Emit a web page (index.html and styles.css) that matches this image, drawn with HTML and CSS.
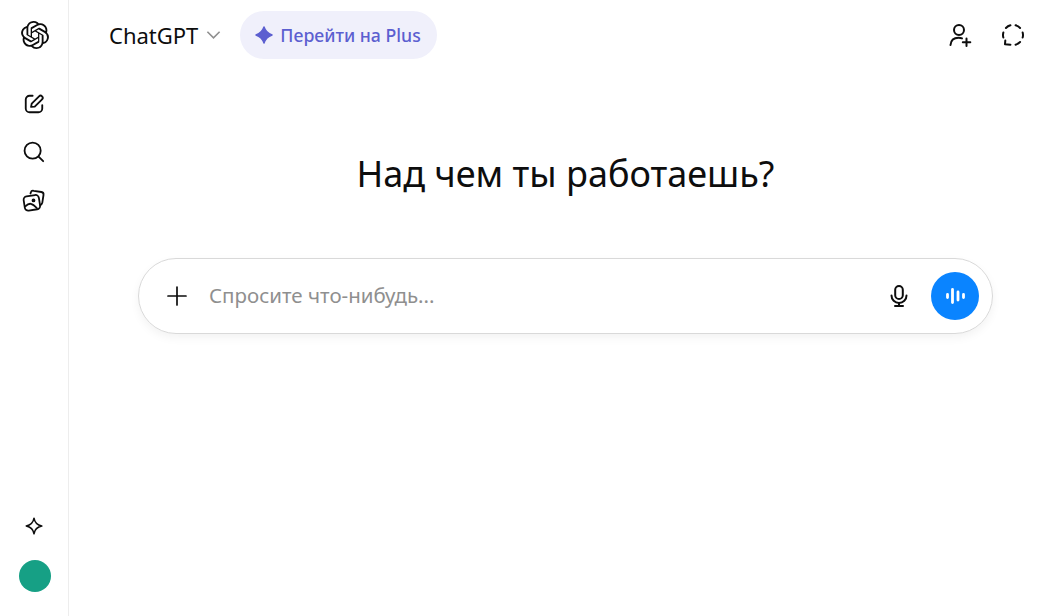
FILE: index.html
```html
<!DOCTYPE html>
<html lang="ru">
<head>
    <meta charset="utf-8">
    <title>ChatGPT</title>
    <link rel="stylesheet" href="styles.css">
</head>
<body>
    <aside class="sidebar">
        <a class="side-logo" href="#">
            <svg class="logo-icon" viewBox="0 0 24 24"><path d="M22.2819 9.8211a5.9847 5.9847 0 0 0-.5157-4.9108 6.0462 6.0462 0 0 0-6.5098-2.9A6.0651 6.0651 0 0 0 4.9807 4.1818a5.9847 5.9847 0 0 0-3.9977 2.9 6.0462 6.0462 0 0 0 .7427 7.0966 5.98 5.98 0 0 0 .511 4.9107 6.051 6.051 0 0 0 6.5146 2.9001A5.9847 5.9847 0 0 0 13.2599 24a6.0557 6.0557 0 0 0 5.7718-4.2058 5.9894 5.9894 0 0 0 3.9977-2.9001 6.0557 6.0557 0 0 0-.7475-7.0729zm-9.022 12.6081a4.4755 4.4755 0 0 1-2.8764-1.0408l.1419-.0804 4.7783-2.7582a.7948.7948 0 0 0 .3927-.6813v-6.7369l2.02 1.1686a.071.071 0 0 1 .038.052v5.5826a4.504 4.504 0 0 1-4.4945 4.4944zm-9.6607-4.1254a4.4708 4.4708 0 0 1-.5346-3.0137l.142.0852 4.783 2.7582a.7712.7712 0 0 0 .7806 0l5.8428-3.3685v2.3324a.0804.0804 0 0 1-.0332.0615L9.74 19.9502a4.4992 4.4992 0 0 1-6.1408-1.6464zM2.3408 7.8956a4.485 4.485 0 0 1 2.3655-1.9728V11.6a.7664.7664 0 0 0 .3879.6765l5.8144 3.3543-2.0201 1.1685a.0757.0757 0 0 1-.071 0l-4.8303-2.7865A4.504 4.504 0 0 1 2.3408 7.872zm16.5963 3.8558L13.1038 8.364 15.1192 7.2a.0757.0757 0 0 1 .071 0l4.8303 2.7913a4.4944 4.4944 0 0 1-.6765 8.1042v-5.6772a.79.79 0 0 0-.407-.667zm2.0107-3.0231l-.142-.0852-4.7735-2.7818a.7759.7759 0 0 0-.7854 0L9.409 9.2297V6.8974a.0662.0662 0 0 1 .0284-.0615l4.8303-2.7866a4.4992 4.4992 0 0 1 6.6802 4.66zM8.3065 12.863l-2.02-1.1638a.0804.0804 0 0 1-.038-.0567V6.0742a4.4992 4.4992 0 0 1 7.3757-3.4537l-.142.0805L8.704 5.459a.7948.7948 0 0 0-.3927.6813zm1.0976-2.3654l2.602-1.4998 2.6069 1.4998v2.9994l-2.5974 1.4997-2.6067-1.4997Z"/></svg>
        </a>
        <nav class="side-nav">
            <a class="side-btn" href="#">
                <svg class="icon icon-side" viewBox="0 0 24 24"><path d="M10.5 3H7.200a4.200 4.200 0 0 0-4.200 4.200v9.600a4.200 4.200 0 0 0 4.200 4.200h9.600a4.200 4.200 0 0 0 4.200-4.200v-3.600"/><path d="M8.800 15.200l.7-3.600 8-8a2.300 2.300 0 0 1 3.300 3.300l-8 8z"/></svg>
            </a>
            <a class="side-btn" href="#">
                <svg class="icon icon-side" viewBox="0 0 24 24"><circle cx="10.500" cy="10.500" r="8.800"/><path d="M17 17l5 5"/></svg>
            </a>
            <a class="side-btn" href="#">
                <svg class="icon icon-thin" viewBox="0 0 24 24"><path d="M8.500 5.500l.3-1a2.500 2.500 0 0 1 3-1.700l7.600 1.200a2.600 2.600 0 0 1 2.100 3l-1.100 7.200a5 5 0 0 1-2 3"/><rect x="2.200" y="7.600" width="15.400" height="14.400" rx="3.400" transform="rotate(-9 10 15)"/><circle cx="11.500" cy="12.400" r="1"/><path d="M3.600 18.200c3.600-3.800 6.600-3.200 11.200 1.800"/></svg>
            </a>
        </nav>
        <div class="side-bottom">
            <a class="side-btn side-btn-small" href="#">
                <svg class="icon icon-star" viewBox="0 0 18 18"><path d="M9 1.200c.7 4.400 3 6.900 7.800 7.800-4.800.9-7.100 3.400-7.800 7.800-.7-4.400-3-6.900-7.800-7.800C6 8.100 8.300 5.600 9 1.200z"/></svg>
            </a>
            <div class="avatar"></div>
        </div>
    </aside>

    <main class="main">
        <header class="topbar">
            <button class="model-btn">
                ChatGPT
                <svg class="chevron" viewBox="0 0 16 10"><path d="M1.500 1.500L8 8l6.500-6.500"/></svg>
            </button>
            <button class="plus-btn">
                <svg class="plus-star" viewBox="0 0 18 18"><path d="M9 1Q11 7 17 9Q11 11 9 17Q7 11 1 9Q7 7 9 1z"/></svg>
                Перейти на Plus
            </button>
            <div class="top-actions">
                <svg class="icon" viewBox="0 0 24 24"><circle cx="11" cy="7" r="5"/><path d="M2.500 22c.4-4.600 3.500-7.300 8-7.300 1.400 0 2.500.2 3.500.7"/><path d="M18.500 15.500v7.500M14.800 19.200h7.500"/></svg>
                <svg class="icon" viewBox="0 0 24 24"><path d="M14.590 2.340A10 10 0 0 1 19.070 4.930M21.660 9.410A10 10 0 0 1 21.660 14.590M19.070 19.070A10 10 0 0 1 14.590 21.660M9.410 21.660L4 21.200 4.300 17.500M2.340 14.590A10 10 0 0 1 2.340 9.410M4.930 4.930A10 10 0 0 1 9.410 2.340"/></svg>
            </div>
        </header>

        <h1 class="title">Над чем ты работаешь?</h1>

        <form class="composer">
            <svg class="composer-plus" viewBox="0 0 22 22"><path d="M11 2v18M2 11h18"/></svg>
            <span class="placeholder">Спросите что-нибудь...</span>
            <svg class="mic" viewBox="0 0 24 24"><rect x="8.200" y="2" width="7.600" height="13" rx="3.800"/><path d="M4.500 11.500a7.500 7.500 0 0 0 15 0"/><path d="M12 19v3M8 22h8"/></svg>
            <button class="voice-btn" type="button">
                <svg viewBox="0 0 20 20"><path d="M2.500 8.500v3M7.500 3.500v13M13 6v8M18.500 8.500v3"/></svg>
            </button>
        </form>
    </main>
</body>
</html>
```

FILE: styles.css
```css
* {
    box-sizing: border-box;
}

body {
    margin: 0;
    height: 100vh;
    display: flex;
    overflow: hidden;
    background: #fff;
    color: #0d0d0d;
    font-family: 'Noto Sans', 'Open Sans', sans-serif;
}

svg {
    display: block;
    flex-shrink: 0;
}

.icon {
    width: 24px;
    height: 24px;
    fill: none;
    stroke: #0d0d0d;
    stroke-width: 2;
    stroke-linecap: round;
    stroke-linejoin: round;
}

.icon-side {
    width: 22px;
    height: 22px;
}

.icon-thin {
    stroke-width: 1.800;
}

/* Sidebar */
.sidebar {
    width: 69px;
    flex-shrink: 0;
    display: flex;
    flex-direction: column;
    align-items: center;
    border-right: 1px solid #ededed;
    padding: 21px 0 24px;
}

.side-logo {
    display: flex;
    margin-left: 2px;
}

.logo-icon {
    width: 28px;
    height: 28px;
    fill: #0d0d0d;
}

.side-nav {
    display: flex;
    flex-direction: column;
    margin-top: 31px;
}

.side-btn {
    width: 48px;
    height: 48px;
    display: flex;
    align-items: center;
    justify-content: center;
}

.side-btn-small {
    height: 32px;
}

.icon-star {
    width: 18px;
    height: 18px;
    stroke-width: 1.500;
}

.side-bottom {
    margin-top: auto;
    display: flex;
    flex-direction: column;
    align-items: center;
    gap: 18px;
}

.avatar {
    width: 32px;
    height: 32px;
    margin-left: 2px;
    border-radius: 50%;
    background: #16a085;
}

/* Main */
.main {
    flex: 1;
    padding: 0 69px;
    min-width: 0;
}

.topbar {
    height: 70px;
    margin: 0 -69px;
    padding: 11px 37px 11px 40px;
    display: flex;
    align-items: center;
}

.model-btn,
.plus-btn {
    border: 0;
    font-family: inherit;
    display: flex;
    align-items: center;
}

.model-btn {
    background: none;
    padding: 0;
    color: #0d0d0d;
    font-size: 22px;
    gap: 8px;
}

.chevron {
    width: 15px;
    height: 10px;
    fill: none;
    stroke: #8f8f8f;
    stroke-width: 1.700;
}

.plus-btn {
    height: 48px;
    margin-left: 19px;
    padding: 0 16px 0 15px;
    border-radius: 24px;
    background: #f0f0fb;
    color: #5c5fd0;
    font-size: 17.700px;
    font-weight: 500;
    gap: 7px;
}

.plus-star {
    width: 18px;
    height: 18px;
    fill: #5c5fd0;
    stroke: #5c5fd0;
    stroke-width: 1.500;
    stroke-linejoin: round;
}

.top-actions {
    margin-left: auto;
    display: flex;
    gap: 29px;
}

.title {
    margin: 68px 0 0;
    text-align: center;
    font-size: 36px;
    line-height: 72px;
    font-weight: 400;
}

.composer {
    margin-top: 48px;
    height: 76px;
    display: flex;
    align-items: center;
    padding: 0 13px 0 27px;
    border: 1px solid #d9d9d9;
    border-radius: 38px;
    box-shadow: 0 4px 10px rgba(0, 0, 0, 0.05);
}

.composer-plus {
    width: 22px;
    height: 22px;
    fill: none;
    stroke: #0d0d0d;
    stroke-width: 1.700;
    stroke-linecap: round;
}

.placeholder {
    margin-left: 21px;
    padding-bottom: 2px;
    flex: 1;
    color: #8f8f8f;
    font-size: 20.500px;
}

.mic {
    width: 24px;
    height: 24px;
    fill: none;
    stroke: #0d0d0d;
    stroke-width: 2;
    stroke-linecap: round;
    stroke-linejoin: round;
}

.voice-btn {
    width: 48px;
    height: 48px;
    margin-left: 20px;
    padding: 14px;
    border: 0;
    border-radius: 50%;
    background: #0a84ff;
}

.voice-btn svg {
    width: 20px;
    height: 20px;
    fill: none;
    stroke: #fff;
    stroke-width: 2.800;
    stroke-linecap: round;
}
```
